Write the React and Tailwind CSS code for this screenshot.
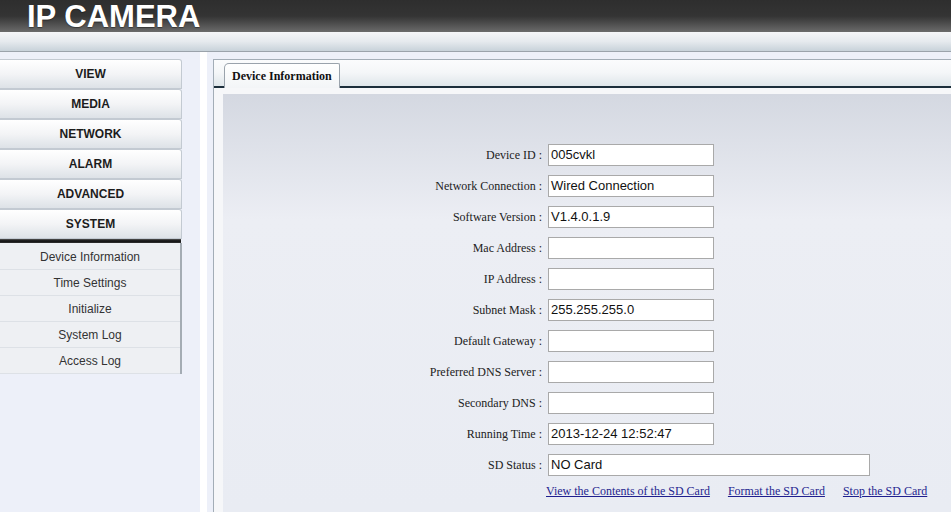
import React from 'react'

const menu = ['VIEW', 'MEDIA', 'NETWORK', 'ALARM', 'ADVANCED', 'SYSTEM']
const subMenu = ['Device Information', 'Time Settings', 'Initialize', 'System Log', 'Access Log']

const fields = [
  { label: 'Device ID :', value: '005cvkl' },
  { label: 'Network Connection :', value: 'Wired Connection' },
  { label: 'Software Version :', value: 'V1.4.0.1.9' },
  { label: 'Mac Address :', value: '' },
  { label: 'IP Address :', value: '' },
  { label: 'Subnet Mask :', value: '255.255.255.0' },
  { label: 'Default Gateway :', value: '' },
  { label: 'Preferred DNS Server :', value: '' },
  { label: 'Secondary DNS :', value: '' },
  { label: 'Running Time :', value: '2013-12-24 12:52:47' },
  { label: 'SD Status :', value: 'NO Card', wide: true },
]

const App = () => {
  return (
    <div className="w-[951px] h-[512px] overflow-hidden bg-[#edf0f9] font-['Liberation_Sans',Arial,sans-serif] flex flex-col">
      {/* header */}
      <div className="h-[32px] shrink-0 bg-gradient-to-b from-[#2e2e2e] via-[#343434] to-[#6b6b6b] pl-[27px] pt-[2px]">
        <div className="text-white font-bold text-[31px] leading-[30px] [text-shadow:0_1px_1px_rgba(0,0,0,0.4)]">IP CAMERA</div>
      </div>
      <div className="h-[20px] shrink-0 bg-gradient-to-b from-[#f5f6f8] via-[#e6eaee] to-[#c8d2da] border-b border-[#9ba3ab]" />

      <div className="flex flex-1 pt-[7px] min-h-0">
        {/* sidebar */}
        <div className="w-[182px] shrink-0 flex flex-col">
          {menu.map(m => (
            <div
              key={m}
              className="h-[30px] flex items-center justify-center border border-l-0 border-[#c3cad2] rounded-tr-[3px] bg-gradient-to-b from-[#ffffff] via-[#f3f4f6] to-[#dde2e7] text-[12px] font-bold text-[#1c1c1c]"
            >
              {m}
            </div>
          ))}
          <div className="h-[4px] bg-gradient-to-b from-[#555] via-[#111] to-[#333] mr-[1px]" />
          <div className="border-r-2 border-[#a4acb4] w-[182px] pt-[1px] bg-[#eef0f3]">
            {subMenu.map(s => (
              <div
                key={s}
                className="h-[26px] flex items-center justify-center bg-[#eef0f3] border-b border-[#dde1e6] text-[12px] text-[#333]"
              >
                {s}
              </div>
            ))}
          </div>
        </div>

        <div className="w-[18px] shrink-0" />
        <div className="w-[7px] shrink-0 bg-white -mt-[7px]" />
        <div className="w-[6px] shrink-0" />

        {/* panel */}
        <div className="flex-1 flex flex-col border-l border-t border-[#a3adb7] min-w-0">
          <div className="h-[28px] shrink-0 flex items-end pl-[10px] bg-gradient-to-b from-[#fbfcfd] via-[#f4f6f8] to-[#dfe6ea] border-b-2 border-[#1c2e3b]">
            <div className="h-[25px] -mb-[2px] px-[7px] flex items-center bg-gradient-to-b from-white to-[#f3f5f7] border border-b-0 border-[#9aa3ac] rounded-tl-[5px] rounded-tr-[2px] font-['Liberation_Serif','Times_New_Roman',serif] font-bold text-[12px] text-[#111]">
              Device Information
            </div>
          </div>
          <div className="flex-1 flex bg-[#f6f7f9] pt-[6px] pl-[9px] min-h-0">
            <div className="flex-1 bg-gradient-to-b from-[#d4d8e1] via-[#eceef4] via-30% to-[#e9ecf3] pt-[45px]">
              <div className="grid grid-cols-[319px_1fr] gap-x-[6px]">
                {fields.map(f => (
                  <React.Fragment key={f.label}>
                    <div className="h-[31px] flex items-center justify-end font-['Liberation_Serif','Times_New_Roman',serif] text-[12px] text-[#222]">
                      {f.label}
                    </div>
                    <div className="h-[31px] flex items-center">
                      <div className={`${f.wide ? 'w-[322px]' : 'w-[166px]'} h-[22px] bg-white border border-[#a9a9a9] pl-[2px] flex items-center text-[13px] text-[#111]`}>
                        {f.value}
                      </div>
                    </div>
                  </React.Fragment>
                ))}
                <div />
                <div className="h-[21px] flex items-center gap-[18px] -ml-[2px] font-['Liberation_Serif','Times_New_Roman',serif] text-[12px] text-[#1f1f8f]">
                  <a href="#" className="underline">View the Contents of the SD Card</a>
                  <a href="#" className="underline">Format the SD Card</a>
                  <a href="#" className="underline">Stop the SD Card</a>
                </div>
              </div>
            </div>
          </div>
        </div>
      </div>
    </div>
  )
}

export default App
